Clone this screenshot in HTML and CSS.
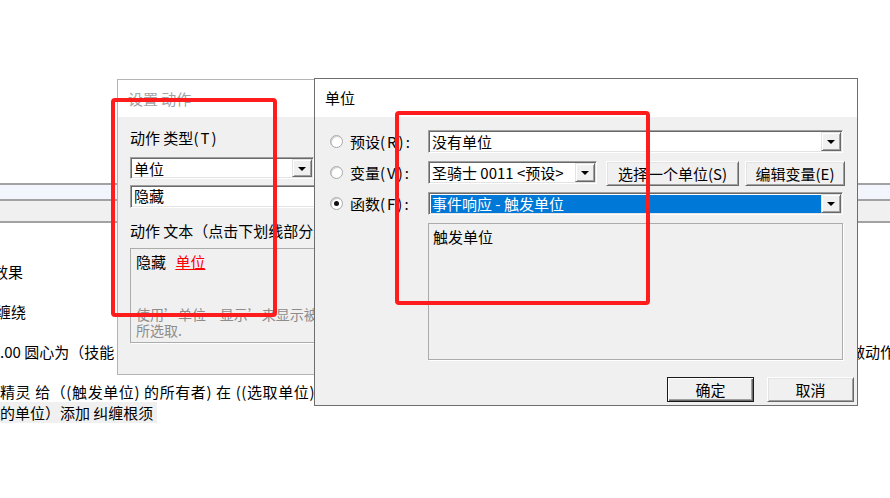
FILE: index.html
```html
<!DOCTYPE html>
<html lang="zh-CN">
<head>
    <meta charset="UTF-8">
    <title>单位</title>
    <link rel="stylesheet" href="styles.css">
</head>
<body>
    <!-- editor behind the dialogs -->
    <div class="app">
        <div class="app-top"></div>
        <div class="grid-head"></div>
        <div class="grid-sub"></div>
        <div class="tree">
            <div class="tree-row"><span class="cut cut-a">效果</span></div>
            <div class="tree-row"><span class="cut cut-b">缠绕</span></div>
            <div class="tree-row">
                <span>.00 圆心为（技能</span>
                <span class="tree-right">做动作</span>
            </div>
            <div class="tree-row tree-last">精灵 给（(触发单位) 的所有者) 在 ((选取单位) 的位置) 创建</div>
            <div class="tree-row tree-wrap"><span class="hl">的单位）添加 纠缠根须</span></div>
        </div>
    </div>

    <!-- back dialog -->
    <section class="dlg dlg-action">
        <header class="dlg-title">设置 动作</header>
        <div class="act-body">
            <div class="lbl">动作 类型<span class="acc">(T)</span></div>
            <div class="combo combo-type">
                <span class="combo-text">单位</span>
                <span class="drop"></span>
            </div>
            <div class="field">隐藏</div>
            <div class="lbl lbl-text">动作 文本（点击下划线部分进行编辑）</div>
            <div class="memo memo-act">
                <div>隐藏 <a class="link">单位</a></div>
                <div class="hint">使用’单位 – 显示’来显示被当前事件<br>所选取.</div>
            </div>
        </div>
    </section>

    <!-- front dialog -->
    <section class="dlg dlg-unit">
        <header class="dlg-title">单位</header>
        <div class="unit-body">
            <div class="unit-row">
                <label class="opt"><span class="radio"></span>预设<span class="acc">(R):</span></label>
                <div class="combo combo-wide">
                    <span class="combo-text">没有单位</span>
                    <span class="drop"></span>
                </div>
            </div>
            <div class="unit-row row-var">
                <label class="opt"><span class="radio"></span>变量<span class="acc">(V):</span></label>
                <div class="combo combo-var">
                    <span class="combo-text">圣骑士 0011 &lt;预设&gt;</span>
                    <span class="drop"></span>
                </div>
                <button class="btn btn-pick">选择一个单位(S)</button>
                <button class="btn btn-edit">编辑变量(E)</button>
            </div>
            <div class="unit-row row-fn">
                <label class="opt"><span class="radio on"></span>函数<span class="acc">(F):</span></label>
                <div class="combo combo-wide">
                    <span class="combo-text sel">事件响应 - 触发单位</span>
                    <span class="drop"></span>
                </div>
            </div>
            <div class="unit-row row-desc">
                <div class="opt"></div>
                <div class="memo memo-unit">触发单位</div>
            </div>
            <div class="actions">
                <button class="btn btn-default">确定</button>
                <button class="btn">取消</button>
            </div>
        </div>
    </section>

    <!-- red markers -->
    <div class="mark mark-a"></div>
    <div class="mark mark-b"></div>
</body>
</html>
```

FILE: styles.css
```css
* {
    box-sizing: border-box;
}

body {
    margin: 0;
    width: 890px;
    height: 498px;
    overflow: hidden;
    position: relative;
    background: #fff;
    font-family: "Noto Sans CJK SC", "Noto Sans", sans-serif;
    font-size: 15px;
    color: #000;
}

/* background editor */
.app-top {
    height: 183px;
}

.grid-head {
    height: 18px;
    background: #f2f6fc;
    border-top: 2px solid #a2a2a2;
    border-bottom: 2px solid #a2a2a2;
}

.grid-sub {
    height: 22px;
    background: #f0f0f0;
    border-bottom: 2px solid #a2a2a2;
}

.tree {
    padding-top: 38px;
}

.tree-row {
    display: flex;
    height: 21px;
    line-height: 21px;
    margin-bottom: 19px;
    white-space: nowrap;
}

.cut-a {
    margin-left: -7px;
}

.cut-b {
    margin-left: -4px;
}

.tree-right {
    margin-left: auto;
    width: 40px;
    overflow: hidden;
}

.tree-last {
    margin-bottom: 0;
    letter-spacing: 0.6px;
}

.tree-wrap .hl {
    background: #f0f0f0;
    padding-right: 4px;
}

/* dialogs */
.dlg {
    position: absolute;
    background: #f0f0f0;
}

.dlg-title {
    display: flex;
    align-items: center;
    background: #fff;
    padding-left: 10px;
    line-height: 20px;
}

.dlg-action {
    left: 117px;
    top: 79px;
    width: 420px;
    height: 296px;
    border: 1px solid #b4b4b4;
}

.dlg-action .dlg-title {
    height: 37px;
    color: #a3a3a3;
}

.dlg-unit {
    left: 314px;
    top: 78px;
    width: 544px;
    border: 1px solid #6e6e6e;
}

.dlg-unit .dlg-title {
    height: 38px;
}

.acc {
    letter-spacing: 2px;
}

/* controls */
.combo {
    display: flex;
    height: 23px;
    padding: 1px;
    background: #fff;
    border: 1px solid;
    border-color: #a0a0a0 #fff #fff #a0a0a0;
    box-shadow: inset 1px 1px #696969, inset -1px -1px #e3e3e3;
    flex-shrink: 0;
}

.combo-text {
    flex: 1;
    padding-left: 2px;
    line-height: 19px;
    white-space: nowrap;
    overflow: hidden;
}

.combo-text.sel {
    margin: 1px 0 0 1px;
    padding-left: 1px;
    line-height: 18px;
    height: 18px;
    background: #0078d7;
    color: #fff;
}

.drop {
    position: relative;
    width: 20px;
    background: #f0f0f0;
    border: 1px solid;
    border-color: #e3e3e3 #696969 #696969 #e3e3e3;
    box-shadow: inset 1px 1px #fff, inset -1px -1px #a0a0a0;
}

.drop::after {
    content: "";
    position: absolute;
    left: 5px;
    top: 7px;
    border-left: 4px solid transparent;
    border-right: 4px solid transparent;
    border-top: 4px solid #000;
}

.field {
    width: 300px;
    height: 23px;
    margin-top: 6px;
    padding-left: 3px;
    line-height: 19px;
    background: #fff;
    border: 1px solid;
    border-color: #a0a0a0 #fff #fff #a0a0a0;
    box-shadow: inset 1px 1px #696969, inset -1px -1px #e3e3e3;
}

.btn {
    height: 25px;
    padding: 0;
    font: inherit;
    line-height: 22px;
    color: #000;
    background: #f0f0f0;
    border: 1px solid;
    border-color: #fff #696969 #696969 #fff;
    box-shadow: inset 1px 1px #e3e3e3, inset -1px -1px #a0a0a0;
    flex-shrink: 0;
    width: 87px;
}

.btn-default {
    border-color: #1a1a1a;
    box-shadow: inset 1px 1px #fff, inset -1px -1px #696969, inset -2px -2px #a0a0a0;
}

.memo {
    background: #f0f0f0;
    border: 1px solid #acacac;
    box-shadow: 1px 1px 0 #fff;
}

/* back dialog body */
.act-body {
    padding: 11px 0 0 12px;
}

.lbl {
    line-height: 20px;
}

.combo-type {
    width: 184px;
    height: 22px;
    margin-top: 9px;
}

.lbl-text {
    margin-top: 13px;
    white-space: nowrap;
}

.memo-act {
    width: 300px;
    height: 95px;
    margin-top: 7px;
    padding: 3px 0 0 5px;
    line-height: 20px;
    white-space: nowrap;
}

.link {
    color: #f00;
    text-decoration: underline;
    margin-left: 6px;
}

.hint {
    margin-top: 34px;
    font-size: 14px;
    line-height: 16px;
    color: #8c8c8c;
}

/* front dialog body */
.unit-body {
    padding: 13px 0 3px 0;
}

.unit-row {
    display: flex;
    align-items: center;
    padding-right: 14px;
}

.opt {
    display: flex;
    align-items: center;
    width: 113px;
    flex-shrink: 0;
    padding-left: 15px;
    line-height: 20px;
    white-space: nowrap;
}

.radio {
    position: relative;
    width: 13px;
    height: 13px;
    margin-right: 7px;
    border-radius: 50%;
    background: #fff;
    border: 1px solid #a8a8a8;
    box-shadow: inset 1px 1px #d0d0d0;
}

.radio.on::after {
    content: "";
    position: absolute;
    left: 3px;
    top: 3px;
    width: 5px;
    height: 5px;
    border-radius: 50%;
    background: #111;
}

.combo-wide {
    width: 415px;
}

.row-var {
    margin-top: 8px;
    align-items: flex-start;
}

.row-var .opt {
    height: 23px;
}

.combo-var {
    width: 169px;
}

.btn-pick {
    width: 133px;
    margin-left: 9px;
}

.btn-edit {
    width: 100px;
    margin-left: 6px;
}

.row-fn {
    margin-top: 6px;
}

.row-desc {
    margin-top: 8px;
    align-items: flex-start;
}

.memo-unit {
    width: 416px;
    height: 137px;
    padding: 3px 0 0 4px;
    line-height: 20px;
}

.actions {
    display: flex;
    justify-content: flex-end;
    gap: 13px;
    margin-top: 17px;
    padding-right: 3px;
}

/* annotation boxes */
.mark {
    position: absolute;
    border: 4px solid #ff1c1c;
    border-radius: 4px;
}

.mark-a {
    left: 111px;
    top: 98px;
    width: 166px;
    height: 219px;
}

.mark-b {
    left: 395px;
    top: 111px;
    width: 255px;
    height: 194px;
}
```
